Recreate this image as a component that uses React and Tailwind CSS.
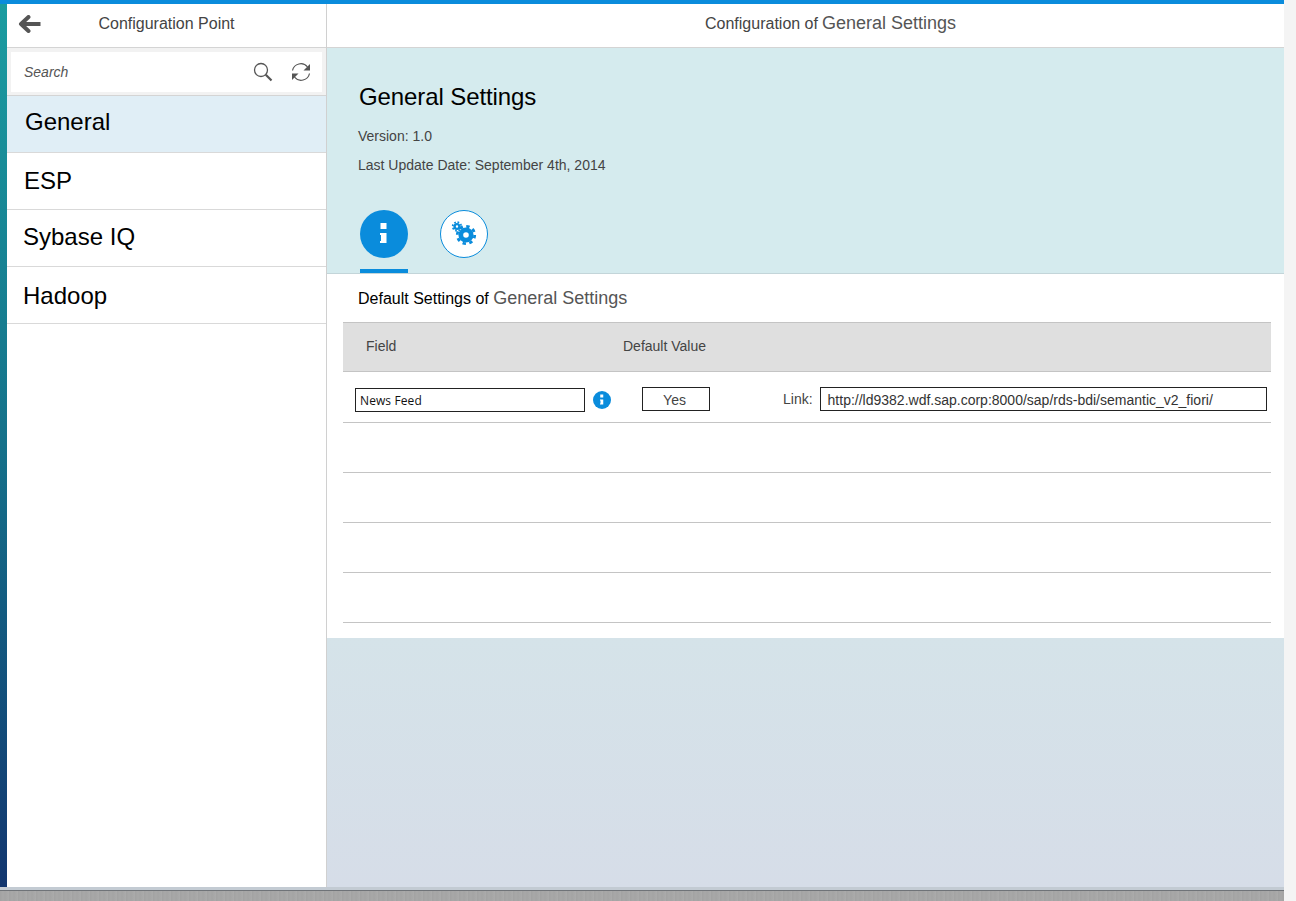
import React from "react";

const items = [
  { name: "General", active: true, cls: "pl-[18px] pb-[4px]" },
  { name: "ESP", cls: "pl-[17px]" },
  { name: "Sybase IQ", cls: "pl-[16px] pb-[2px]" },
  { name: "Hadoop", cls: "pl-[16px] pt-[2px]" },
];

function BackArrow() {
  return (
    <svg width="24" height="18" viewBox="0 0 24 18" fill="none" stroke="#555555" aria-hidden>
      <path d="M22.500 9H4" strokeWidth="4" />
      <path d="M10.500 2 3 9l7.500 7" strokeWidth="4" strokeLinecap="round" strokeLinejoin="round" />
    </svg>
  );
}

function SearchIcon() {
  return (
    <svg width="20" height="20" viewBox="0 0 20 20" fill="none" stroke="#555555" aria-hidden>
      <circle cx="8" cy="8" r="6.500" strokeWidth="1.300" />
      <path d="M12.800 12.800 18.500 18.500" strokeWidth="2.200" />
    </svg>
  );
}

function RefreshIcon() {
  return (
    <svg width="20" height="20" viewBox="0 0 20 20" fill="none" aria-hidden>
      <path d="M1.500 8.500A8.500 8.500 0 0 1 16.500 5" stroke="#555555" strokeWidth="1.200" />
      <path d="M18.500 11.500A8.500 8.500 0 0 1 3.500 15" stroke="#555555" strokeWidth="1.200" />
      <path d="M19 2v6.500h-6.500z" fill="#555555" />
      <path d="M1 18v-6.500h6.500z" fill="#555555" />
    </svg>
  );
}

function InfoGlyph({ size = 24, color = "#ffffff" }) {
  return (
    <svg width={size} height={size} viewBox="0 0 24 24" fill={color} aria-hidden>
      <rect x="8.500" y="1" width="6" height="6" />
      <path d="M8 11h6.500v10H8v-2h1v-6H8z" />
    </svg>
  );
}

function Gears() {
  return (
    <svg width="26" height="26" viewBox="0 0 26 26" fill="none" stroke="#0a8cdc" aria-hidden>
      <circle cx="15" cy="14" r="5.200" strokeWidth="4.800" />
      <circle cx="15" cy="14" r="8.700" strokeWidth="2.800" strokeDasharray="3.400 3.430" />
      <circle cx="6" cy="5.500" r="2.400" strokeWidth="2.400" />
      <circle cx="6" cy="5.500" r="4.300" strokeWidth="1.800" strokeDasharray="1.700 1.680" />
    </svg>
  );
}

function Sidebar() {
  return (
    <aside className="w-[320px] shrink-0 bg-white border-r border-[#d0d0d0] flex flex-col">
      <div className="h-[44px] relative flex items-center justify-center border-b border-[#d4d4d4] pb-[4px]">
        <span className="absolute left-[11px] top-[11px]">
          <BackArrow />
        </span>
        <span className="text-[16px] text-[#444444]">Configuration Point</span>
      </div>
      <div className="h-[48px] bg-[#f2f2f2] px-[4px] pt-[4px] border-b border-[#d4d4d4]">
        <div className="h-[40px] bg-white flex items-center pl-[13px] pr-[11px]">
          <span className="text-[14px] italic text-[#555555] flex-1">Search</span>
          <span className="mr-[18px] flex">
            <SearchIcon />
          </span>
          <RefreshIcon />
        </div>
      </div>
      {items.map((it) => (
        <div
          key={it.name}
          className={`h-[57px] flex items-center border-b border-[#d9d9d9] text-[24px] text-black ${it.cls} ${it.active ? "bg-[#e0eef6]" : "bg-white"}`}
        >
          {it.name}
        </div>
      ))}
    </aside>
  );
}

function Row({ children, first }) {
  return <div className={`${first ? "h-[51px]" : "h-[50px]"} border-b border-[#c4c4c4] flex items-center`}>{children}</div>;
}

function Main() {
  return (
    <main className="flex-1 min-w-0 flex flex-col">
      <div className="h-[44px] shrink-0 bg-white border-b border-[#d4d4d4] pl-[378px] pb-[4px] flex items-center text-[16px] text-[#444444]">
        Configuration of <span className="text-[18px] text-[#555555] ml-[4px]">General Settings</span>
      </div>
      <section className="h-[226px] shrink-0 bg-[#d5ebee] border-b border-[#c3d5d9] pl-[31px] flex flex-col">
        <h1 className="text-[24px] leading-[28px] text-black mt-[35px] ml-[1px] tracking-[-0.1px]">General Settings</h1>
        <p className="text-[14px] leading-[16px] text-[#444444] mt-[17px]">Version: 1.0</p>
        <p className="text-[14px] leading-[16px] text-[#444444] mt-[13px]">Last Update Date: September 4th, 2014</p>
        <div className="flex gap-[32px] mt-[37px] ml-[2px]">
          <div className="flex flex-col items-center">
            <div className="w-[48px] h-[48px] rounded-full bg-[#0a8cdc] flex items-center justify-center">
              <InfoGlyph />
            </div>
            <div className="w-[48px] h-[4px] mt-[11px] bg-[#0a8cdc]" />
          </div>
          <div className="w-[48px] h-[48px] rounded-full bg-white border border-[#0a8cdc] flex items-center justify-center">
            <Gears />
          </div>
        </div>
      </section>
      <section className="h-[364px] shrink-0 bg-white px-[16px] pt-[15px]">
        <h2 className="text-[16px] leading-[18px] pl-[15px] h-[33px] text-black">
          Default Settings of <span className="text-[18px] text-[#555555]">General Settings</span>
        </h2>
        <div className="w-[928px] text-[14px] text-[#444444]">
          <div className="h-[50px] bg-[#dfdfdf] border-y border-[#c4c4c4] flex items-center pl-[23px] pb-[2px]">
            <span className="w-[257px]">Field</span>
            <span>Default Value</span>
          </div>
          <Row first>
            <div className="w-[230px] h-[24px] ml-[12px] mt-[5px] border border-[#222222] flex items-center pl-[4px] pt-[3px] text-[12px] tracking-[0.1px] text-[#111111] font-['Open_Sans',sans-serif]">
              News Feed
            </div>
            <div className="w-[18px] h-[18px] ml-[8px] mt-[5px] rounded-full bg-[#0a8cdc] flex items-center justify-center">
              <InfoGlyph size={12} />
            </div>
            <div className="w-[68px] h-[24px] ml-[31px] mt-[3px] border border-[#222222] flex items-center justify-center pr-[3px] pt-[3px]">Yes</div>
            <span className="ml-[73px] mt-[5px]">Link:</span>
            <div className="w-[447px] h-[24px] ml-[7px] mt-[3px] border border-[#222222] flex items-center pl-[7px] pt-[3px] text-[#333333]">
              http://ld9382.wdf.sap.corp:8000/sap/rds-bdi/semantic_v2_fiori/
            </div>
          </Row>
          <Row />
          <Row />
          <Row />
          <Row />
        </div>
      </section>
      <div className="flex-1 bg-gradient-to-b from-[#d5e3e9] to-[#d6dde8]" />
    </main>
  );
}

export default function App() {
  return (
    <div className="w-[1296px] h-[901px] overflow-hidden flex bg-[#f4f4f4] font-['Liberation_Sans',sans-serif]">
      <div className="w-[1284px] flex flex-col">
        <div className="h-[4px] shrink-0 bg-[#0a8cdc]" />
        <div className="h-[883px] shrink-0 flex">
          <div className="w-[7px] shrink-0 bg-gradient-to-b from-[#1a9ca0] via-[#15718a] to-[#12366f]" />
          <Sidebar />
          <Main />
        </div>
        <div className="h-[3px] shrink-0 bg-[#c3cbd3]" />
        <div className="h-[1px] shrink-0 bg-[#6f7378]" />
        <div className="flex-1 bg-[#a6a6a6] bg-[repeating-linear-gradient(90deg,#a2a2a2_0px,#a8a8a8_3px,#a4a4a4_5px,#ababab_9px)]" />
      </div>
    </div>
  );
}
